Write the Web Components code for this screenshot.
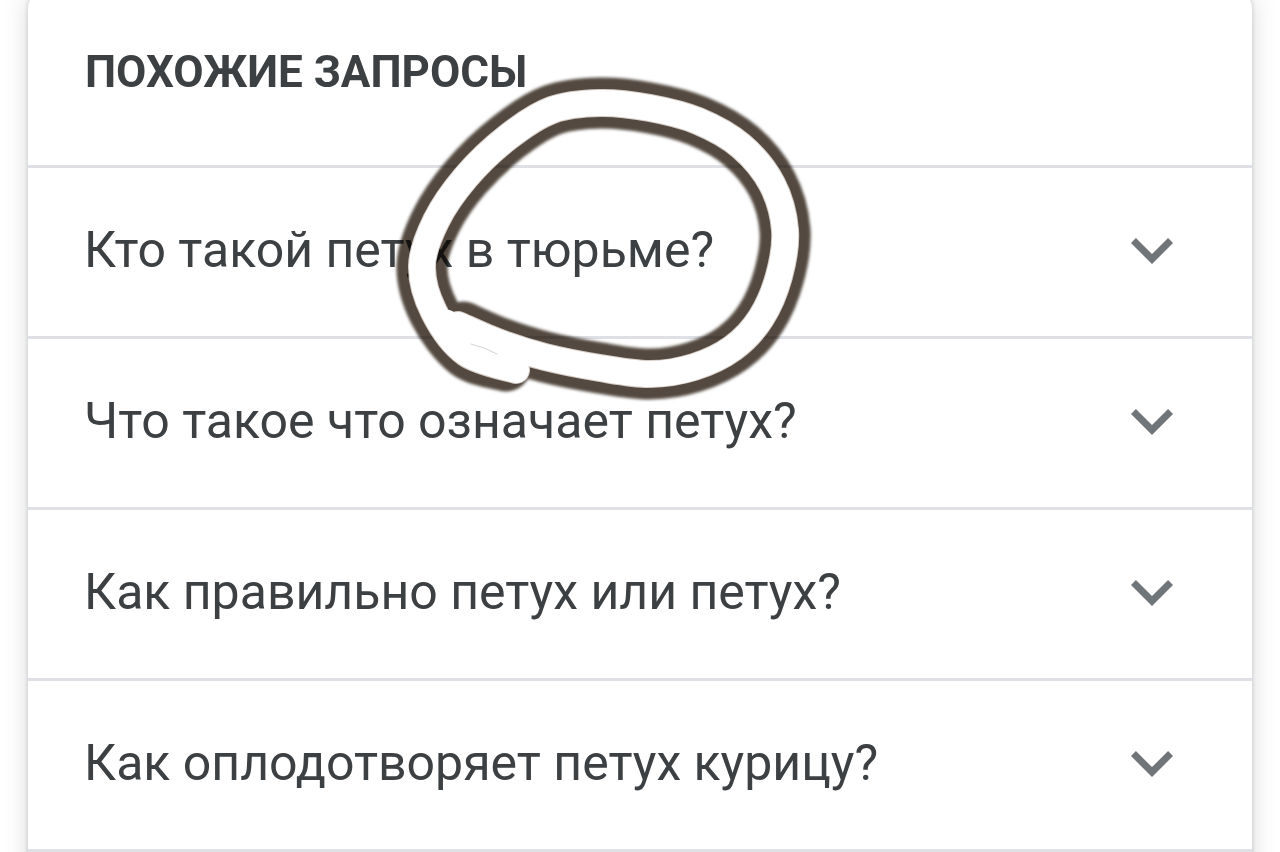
<!DOCTYPE html>
<html lang="ru">
<head>
<meta charset="utf-8">
<meta name="viewport" content="width=device-width, initial-scale=1">
<title>Похожие запросы</title>
<style>
  body { margin: 0; height: 100vh; overflow: hidden; background: #fff; font-family: Roboto, "Liberation Sans", sans-serif; color: #3c4043; }
</style>
</head>
<body>
<related-card>
  <span slot="title">ПОХОЖИЕ ЗАПРОСЫ</span>
  <related-question>Кто такой петух в тюрьме?</related-question>
  <related-question>Что такое что означает петух?</related-question>
  <related-question>Как правильно петух или петух?</related-question>
  <related-question>Как оплодотворяет петух курицу?</related-question>
  <marker-circle slot="overlay"></marker-circle>
</related-card>

<script>
class RelatedCard extends HTMLElement {
  constructor() {
    super();
    this.attachShadow({ mode: 'open' }).innerHTML = `
      <style>
        :host { display: block; }
        section {
          position: relative; box-sizing: border-box; min-height: calc(100vh + 40px);
          margin: -8px 28px 0; border-radius: 16px; background: #fff;
          box-shadow: 0 0 4px rgba(60,64,67,.22), 0 2px 24px rgba(60,64,67,.2);
        }
        h2 { margin: 0; padding: 56px 57px 69px; font-size: 44px; line-height: 48px; font-weight: 700; }
        .list { border-bottom: 3px solid #dfe0e5; }
      </style>
      <section>
        <h2><slot name="title"></slot></h2>
        <div class="list"><slot></slot></div>
        <slot name="overlay"></slot>
      </section>`;
  }
}

class RelatedQuestion extends HTMLElement {
  constructor() {
    super();
    this.attachShadow({ mode: 'open' }).innerHTML = `
      <style>
        :host { display: block; border-top: 3px solid #dfe0e5; }
        button {
          display: flex; align-items: center; justify-content: space-between; width: 100%; box-sizing: border-box;
          min-height: 168px; margin: 0; padding: 0 58px 4px 56px; border: 0; background: none;
          color: inherit; font-family: inherit; font-size: 50px; line-height: 56px; text-align: left; cursor: pointer;
        }
        svg { flex: none; width: 84px; height: 84px; fill: #70757a; }
      </style>
      <button type="button" aria-expanded="false">
        <span><slot></slot></span>
        <svg viewBox="0 0 24 24" aria-hidden="true"><path d="M7.41 8.59 12 13.17l4.59-4.58L18 10l-6 6-6-6z"/></svg>
      </button>`;
    const button = this.shadowRoot.querySelector('button');
    button.addEventListener('click', () =>
      button.setAttribute('aria-expanded', String(button.getAttribute('aria-expanded') !== 'true')));
  }
}

// Smooth curve through a list of points.
function curve(pts) {
  let d = 'M' + pts[0];
  for (let i = 0; i < pts.length - 1; i++) {
    const a = pts[i - 1] || pts[i], b = pts[i], c = pts[i + 1], e = pts[i + 2] || c;
    d += ` C${b[0] + (c[0] - a[0]) / 6} ${b[1] + (c[1] - a[1]) / 6} ${c[0] - (e[0] - b[0]) / 6} ${c[1] - (e[1] - b[1]) / 6} ${c}`;
  }
  return d;
}

// Hand-drawn marker loop with a dark halo that tints what lies below it.
class MarkerCircle extends HTMLElement {
  constructor() {
    super();
    const loop = [[500,343],[545,357],[600,368],[650,374],[694,367],[733,348],[761,318],
      [779,276],[785,230],[772,184],[741,146],[698,121],[650,108],[600,103],[552,110],
      [508,137],[466,177],[436,221],[422,266],[434,312],[466,353]];
    const line = curve([[458,325], ...loop, [516,370]]);
    const halo = curve([[463,327], ...loop, [506,366]]);
    this.attachShadow({ mode: 'open' }).innerHTML = `
      <style>
        :host { position: absolute; left: 352px; top: 68px; width: 440px; height: 360px; pointer-events: none; }
        svg { position: absolute; inset: 0; width: 440px; height: 360px; fill: none; stroke-linecap: round; stroke-linejoin: round; }
        .halo { mix-blend-mode: multiply; }
      </style>
      <svg class="halo" viewBox="380 60 440 360" aria-hidden="true">
        <defs><filter id="soft"><feGaussianBlur stdDeviation="1.5"/></filter></defs>
        <path d="${halo}" stroke="#52483f" stroke-width="51" filter="url(#soft)"/>
      </svg>
      <svg viewBox="380 60 440 360" aria-hidden="true">
        <path d="${line}" stroke="#d5cbc5" stroke-width="28"/>
        <path d="${line}" stroke="#fff" stroke-width="26"/>
        <path d="M448 319 480 338 520 356" stroke="#fff" stroke-width="18"/>
        <path d="M471 344 Q484 347 497 354" stroke="#d2d2d2" stroke-width="1"/>
      </svg>`;
  }
}

customElements.define('related-card', RelatedCard);
customElements.define('related-question', RelatedQuestion);
customElements.define('marker-circle', MarkerCircle);
</script>
</body>
</html>
